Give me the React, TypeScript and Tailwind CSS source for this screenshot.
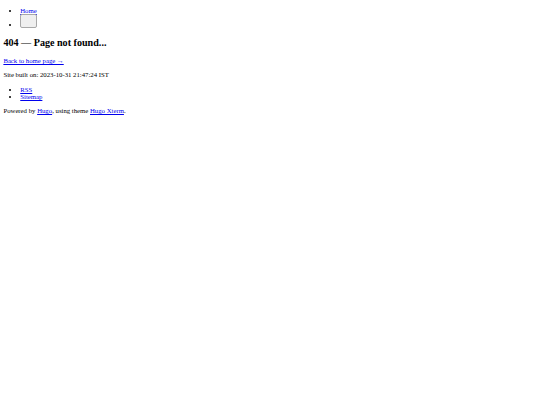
export default function App() {
  return (
    <div className="mx-[3.375px] bg-white font-['Liberation_Serif',serif] text-[6.75px] leading-[7.5px] text-black">
      <header>
        <nav>
          <ul className="my-[6.75px] list-disc pl-[16.875px]">
            <li>
              <a href="#" className="text-[#0000ee] underline">
                Home
              </a>
            </li>
            <li>
              <button
                type="button"
                aria-label="Toggle theme"
                className="inline-block h-[14px] w-[17px] rounded-[2px] border border-[#a8a8a8] bg-[#efefef] align-baseline"
              />
            </li>
          </ul>
        </nav>
      </header>

      <main>
        <h1 className="my-[8.4px] text-[10.125px] leading-[11.64px] font-bold">404 — Page not found...</h1>
        <p className="my-[6.75px]">
          <a href="#" className="text-[#0000ee] underline">
            Back to home page →
          </a>
        </p>
      </main>

      <footer>
        <p className="my-[6.75px]">Site built on: 2023-10-31 21:47:24 IST</p>
        <ul className="my-[6.75px] list-disc pl-[16.875px]">
          <li>
            <a href="#" className="text-[#0000ee] underline">
              RSS
            </a>
          </li>
          <li>
            <a href="#" className="text-[#0000ee] underline">
              Sitemap
            </a>
          </li>
        </ul>
        <p className="my-[6.75px]">
          Powered by{" "}
          <a href="#" className="text-[#0000ee] underline">
            Hugo
          </a>
          , using theme{" "}
          <a href="#" className="text-[#0000ee] underline">
            Hugo Xterm
          </a>
          .
        </p>
      </footer>
    </div>
  );
}
